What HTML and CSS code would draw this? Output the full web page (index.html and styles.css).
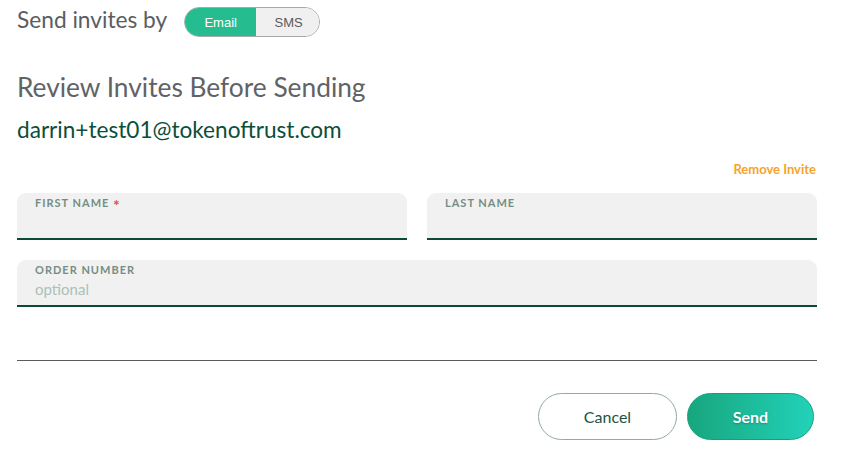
FILE: index.html
```html
<!DOCTYPE html>
<html>
<head>
<meta charset="utf-8">
<link rel="stylesheet" href="styles.css">
</head>
<body>
<div class="page">
  <div class="send-by">
    <span class="send-by-label">Send invites by</span>
    <div class="toggle">
      <button class="toggle-btn active">Email</button>
      <button class="toggle-btn">SMS</button>
    </div>
  </div>
  <h2 class="title">Review Invites Before Sending</h2>
  <div class="invite-email">darrin+test01@tokenoftrust.com</div>
  <div class="remove-row"><a class="remove">Remove Invite</a></div>
  <div class="row first">
    <div class="field">
      <label class="field-label">FIRST NAME <span class="req">*</span></label>
      <div class="field-value"></div>
    </div>
    <div class="field">
      <label class="field-label">LAST NAME</label>
      <div class="field-value"></div>
    </div>
  </div>
  <div class="row">
    <div class="field">
      <label class="field-label">ORDER NUMBER</label>
      <div class="field-value placeholder">optional</div>
    </div>
  </div>
  <hr class="divider">
  <div class="actions">
    <button class="btn cancel">Cancel</button>
    <button class="btn send">Send</button>
  </div>
</div>
</body>
</html>
```
FILE: styles.css
```css
* { box-sizing: border-box; }
body {
  margin: 0;
  background: #fff;
  font-family: Lato, "Open Sans", sans-serif;
}
.page {
  width: 800px;
  margin-left: 17px;
  padding-top: 7px;
}
.send-by {
  display: flex;
  align-items: center;
  height: 30px;
}
.send-by-label {
  font-size: 22.7px;
  color: #5a5d61;
  margin-right: 17px;
  position: relative;
  top: -3px;
}
.toggle {
  display: flex;
  height: 30px;
  width: 136px;
  border: 1px solid #a8a8a8;
  border-radius: 15px;
  overflow: hidden;
}
.toggle-btn {
  border: none;
  font-family: "Liberation Sans", Arial, sans-serif;
  font-size: 13px;
  background: #f0f0f0;
  color: #5a5a5a;
  padding: 0;
  width: 65px;
  flex: none;
}
.toggle-btn.active {
  background: #25bd8f;
  color: #fff;
  width: 71px;
}
.title {
  margin: 34px 0 0;
  font-weight: 400;
  font-size: 26.3px;
  line-height: 32px;
  color: #5f6366;
}
.invite-email {
  margin-top: 14px;
  font-size: 22.6px;
  line-height: 26px;
  color: #0b4e3a;
}
.remove-row {
  display: flex;
  justify-content: flex-end;
  margin-top: 18px;
}
.remove {
  font-size: 13px;
  font-weight: 700;
  color: #f5a42a;
  line-height: 16px;
  margin-right: 1px;
}
.row {
  display: flex;
  gap: 20px;
  margin-top: 8px;
}
.row.first { margin-top: 16px; }
.row + .row { margin-top: 20px; }
.field {
  flex: 1;
  height: 47px;
  background: #f1f1f1;
  border-radius: 9px 9px 0 0;
  border-bottom: 2px solid #0b4a38;
  padding: 3px 18px 0;
}
.field-label {
  display: block;
  font-size: 11px;
  letter-spacing: 1px;
  color: #748e85;
  font-weight: 700;
  line-height: 14px;
  height: 14px;
}
.req {
  color: #d9534f;
  letter-spacing: 0;
  font-size: 16px;
  line-height: 14px;
  vertical-align: top;
  position: relative;
  top: 2px;
}
.field-value {
  font-size: 15px;
  line-height: 20px;
  margin-top: 2px;
}
.placeholder { color: #abc0b8; }
.divider {
  margin: 53px 0 0;
  border: none;
  border-top: 1px solid #5b5b5b;
}
.actions {
  display: flex;
  justify-content: flex-end;
  gap: 10px;
  margin-top: 32px;
  padding-right: 3px;
}
.btn {
  height: 47px;
  border-radius: 24px;
  font-family: Lato, sans-serif;
  font-size: 16px;
}
.cancel {
  width: 139px;
  background: #fff;
  border: 1px solid #8faba2;
  color: #1c5444;
}
.send {
  width: 127px;
  border: 1px solid #16a07a;
  background: linear-gradient(90deg, #17a67d, #22d2b9);
  color: #fff;
  font-weight: 700;
  text-shadow: 0 1px 2px rgba(0,0,0,0.25);
}
```
